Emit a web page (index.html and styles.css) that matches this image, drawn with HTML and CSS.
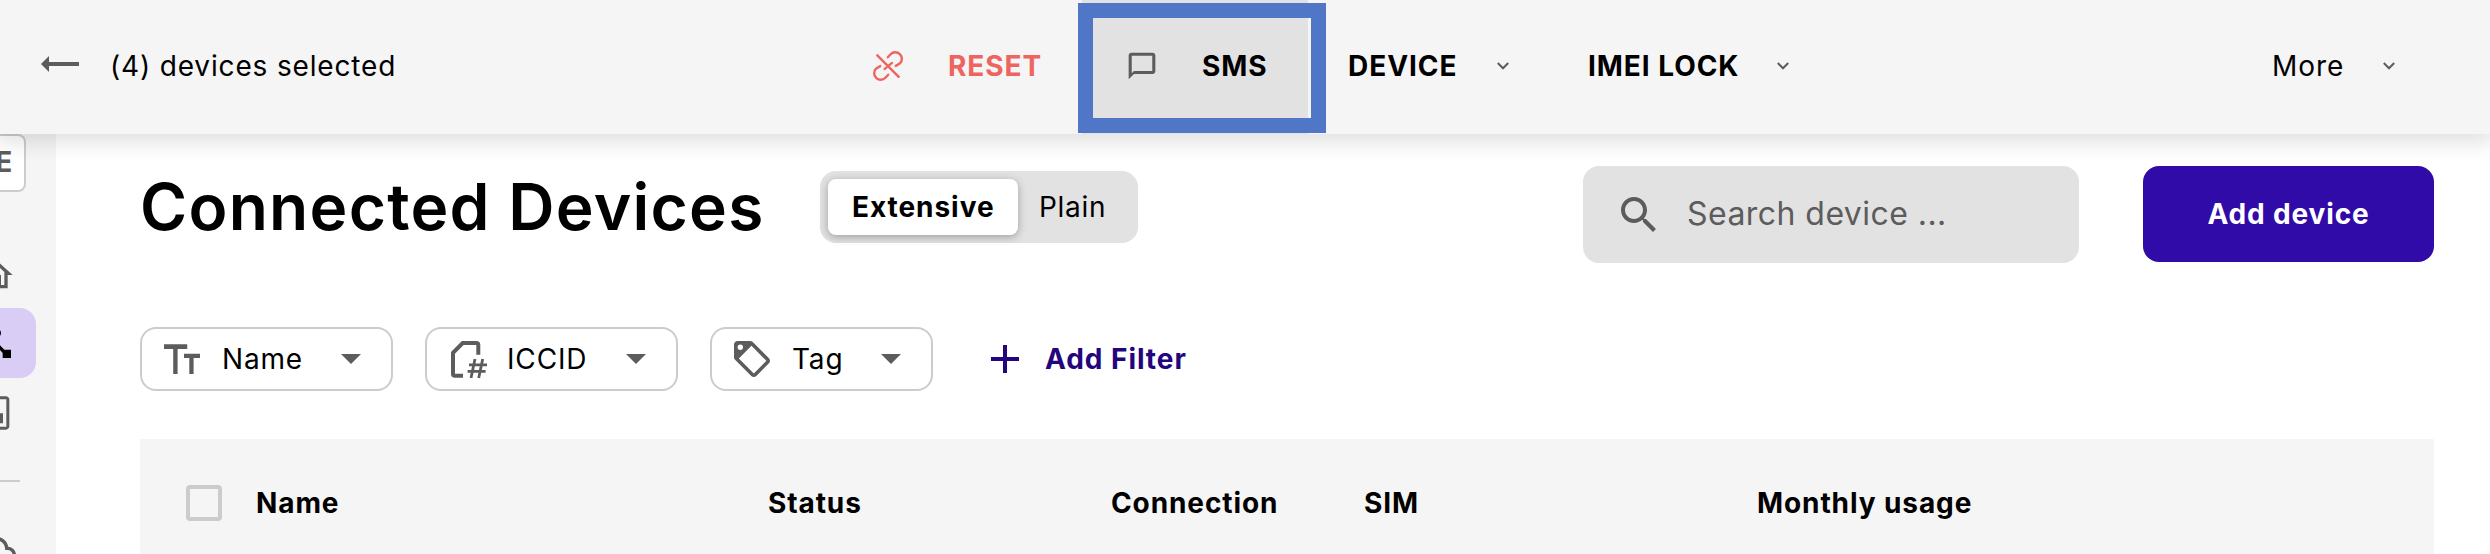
FILE: index.html
```html
<!DOCTYPE html>
<html lang="en">
<head>
<meta charset="utf-8">
<title>Connected Devices</title>
<link rel="stylesheet" href="styles.css">
</head>
<body>
<header class="selection-bar">
  <div class="selection-info">
    <svg class="back-icon" width="38" height="16" viewBox="0 0 38 16"><path d="M0 8L8 0V6H38V10H8V16Z"/></svg>
    <span class="selection-count">(4) devices selected</span>
  </div>
  <button class="action action-reset">
    <svg class="unlink-icon" width="30" height="30" viewBox="0 0 30 30"><path d="M4.3 4.3L25.7 25.8M11.7 17.9L19 11.9M14.8 6.3L17.6 3.3A6.5 6.5 0 0 1 27 12.4L22.8 14.9M15.2 23.7L12.4 26.7A6.5 6.5 0 0 1 3 17.6L7.2 15.1"/></svg>
    <span>RESET</span>
  </button>
  <button class="action action-sms">
    <svg class="icon sms-icon" width="32" height="32" viewBox="0 0 24 24"><path d="M20 2H4c-1.1 0-2 .9-2 2v18l4-4h14c1.1 0 2-.9 2-2V4c0-1.1-.9-2-2-2zm-.3 13.7H6l-1.7 1.7V4.3h15.4v11.4z"/></svg>
    <span>SMS</span>
    <span class="focus-frame"></span>
  </button>
  <button class="action action-device">
    <span class="label-device">DEVICE</span>
    <svg class="chevron" width="12" height="8" viewBox="0 0 12 8"><path d="M.8 1L6 6.3L11.2 1"/></svg>
  </button>
  <button class="action action-imei">
    <span class="label-imei">IMEI LOCK</span>
    <svg class="chevron" width="12" height="8" viewBox="0 0 12 8"><path d="M.8 1L6 6.3L11.2 1"/></svg>
  </button>
  <button class="action action-more">
    <span class="label-more">More</span>
    <svg class="chevron" width="12" height="8" viewBox="0 0 12 8"><path d="M.8 1L6 6.3L11.2 1"/></svg>
  </button>
</header>
<div class="shell">
  <nav class="sidebar">
    <div class="org-badge"><span>E</span></div>
    <a class="nav-item nav-home"><svg class="icon" width="40" height="40" viewBox="0 0 24 24"><path d="M12 5.69l5 4.5V18h-2v-6H9v6H7v-7.81l5-4.5M12 3L2 12h3v8h6v-6h2v6h6v-8h3L12 3z"/></svg></a>
    <a class="nav-item nav-active"><svg width="40" height="40" viewBox="0 0 24 24"><path d="M17 16l-4-4V8.82C14.16 8.4 15 7.3 15 6c0-1.66-1.34-3-3-3S9 4.34 9 6c0 1.3.84 2.4 2 2.82V12l-4 4H3v5h5v-3.05l4-4.2 4 4.2V21h5v-5h-4z"/></svg></a>
    <a class="nav-item"><svg class="icon" width="40" height="40" viewBox="0 0 24 24"><path d="M18 2h-8L4 8v12c0 1.1.9 2 2 2h12c1.1 0 2-.9 2-2V4c0-1.1-.9-2-2-2zm.2 18.2H6V8.83L10.83 3.8H18.2zM14 12.2h2.2v6H14z"/></svg></a>
    <hr class="nav-divider">
    <a class="nav-item nav-cloud"><svg class="icon" width="40" height="40" viewBox="0 0 24 24"><path d="M19.35 10.04C18.67 6.59 15.64 4 12 4 9.11 4 6.61 5.64 5.36 8.04 2.35 8.36 0 10.9 0 14c0 3.31 2.69 6 6 6h13c2.76 0 5-2.24 5-5 0-2.64-2.05-4.78-4.65-4.96zM19 18H6c-2.21 0-4-1.79-4-4s1.79-4 4-4h.71C7.37 7.69 9.48 6 12 6c3.04 0 5.5 2.46 5.5 5.5v.5H19c1.66 0 3 1.34 3 3s-1.34 3-3 3z"/></svg></a>
  </nav>
  <main class="content">
    <div class="title-row">
      <h1>Connected Devices</h1>
      <div class="view-toggle">
        <span class="toggle-option toggle-on">Extensive</span>
        <span class="toggle-option">Plain</span>
      </div>
      <div class="search">
        <svg class="icon" width="48" height="48" viewBox="0 0 24 24"><path d="M15.5 14h-.79l-.28-.27C15.41 12.59 16 11.11 16 9.5 16 5.91 13.09 3 9.5 3S3 5.91 3 9.5 5.91 16 9.5 16c1.61 0 3.09-.59 4.23-1.57l.27.28v.79l5 4.99L20.49 19l-4.99-5zm-6 0C7.01 14 5 11.99 5 9.5S7.01 5 9.5 5 14 7.01 14 9.5 11.99 14 9.5 14z"/></svg>
        <span class="search-text">Search device ...</span>
      </div>
      <button class="add-device">Add device</button>
    </div>
    <div class="filters">
      <div class="chip">
        <svg class="icon" width="36" height="36" viewBox="0 0 36 36"><path d="M0 3.3H23.2V8H13.6V33H9.2V8H0ZM20 12.7H36V17H29.6V33H25.3V17H20Z"/></svg>
        <span>Name</span>
        <svg class="caret" width="20" height="10" viewBox="0 0 20 10"><path d="M0 0H20L10 10Z"/></svg>
      </div>
      <div class="chip">
        <svg class="sim-icon" width="37" height="38" viewBox="0 0 37 38"><path class="sim-outline" d="M27.3 14.8V5Q27.3 3 25.3 3H11.7L2 12.8V34Q2 35.8 4 35.8H12"/><path class="sim-hash" d="M24 19L20 38M31.7 19L27.7 38M18 24.8H36M16.6 31.4H34.6"/></svg>
        <span>ICCID</span>
        <svg class="caret" width="20" height="10" viewBox="0 0 20 10"><path d="M0 0H20L10 10Z"/></svg>
      </div>
      <div class="chip chip-tag">
        <svg class="icon" width="36" height="36" viewBox="2 2 20 20"><path fill-rule="evenodd" d="M21.41 11.58l-9-9C12.05 2.22 11.55 2 11 2H4c-1.1 0-2 .9-2 2v7c0 .55.22 1.05.59 1.42l9 9c.36.36.86.58 1.41.58s1.05-.22 1.41-.59l7-7c.37-.36.59-.86.59-1.41s-.23-1.06-.59-1.42zM11.7 4.7L4.7 11.7L13 20L20 13ZM5.5 4A1.5 1.5 0 1 0 5.5 7A1.5 1.5 0 1 0 5.5 4Z"/></svg>
        <span>Tag</span>
        <svg class="caret" width="20" height="10" viewBox="0 0 20 10"><path d="M0 0H20L10 10Z"/></svg>
      </div>
      <button class="add-filter">
        <svg width="28" height="28" viewBox="0 0 28 28"><path d="M12 0H16V12H28V16H16V28H12V16H0V12H12Z"/></svg>
        <span>Add Filter</span>
      </button>
    </div>
    <div class="table-head">
      <span class="checkbox"></span>
      <span>Name</span>
      <span>Status</span>
      <span>Connection</span>
      <span>SIM</span>
      <span>Monthly usage</span>
    </div>
  </main>
</div>
</body>
</html>
```
FILE: styles.css
```css
* { box-sizing: border-box; }

body {
  margin: 0;
  height: 554px;
  overflow: hidden;
  background: #fff;
  color: #000;
  font: 400 28px/34px Inter, sans-serif;
  letter-spacing: 0.84px;
}
svg { display: block; flex: none; overflow: visible; }
span { white-space: nowrap; }
button {
  margin: 0;
  padding: 0;
  border: 0;
  background: none;
  color: inherit;
  font: inherit;
  letter-spacing: inherit;
}
.icon, .caret, .back-icon { fill: #5c5c5c; }

/* Selection bar */
.selection-bar {
  position: relative;
  z-index: 1;
  display: grid;
  grid-template-columns: 840px 242px 226px 240px 280px 1fr;
  height: 134px;
  background: #f5f5f5;
  box-shadow: 0 4px 20px 4px rgba(0, 0, 0, .125);
}
.selection-info, .action {
  display: flex;
  align-items: center;
  padding-bottom: 2px;
}
.selection-info { padding-left: 41px; }
.back-icon { margin: 0 31px 4px 0; }
.action { font-weight: 700; letter-spacing: 0.95px; }
.action-reset { padding-left: 33px; color: #ee6560; }
.unlink-icon {
  margin-right: 45px;
  fill: none;
  stroke: #ee6560;
  stroke-width: 2.4;
  stroke-linecap: round;
}
.action-sms {
  position: relative;
  padding-left: 44px;
  background: #e2e2e2;
}
.sms-icon { margin-right: 44px; }
.focus-frame {
  position: absolute;
  left: -4.5px;
  top: 3px;
  width: 248px;
  height: 130px;
  border: 15px solid #5077c7;
}
.action-device, .action-imei { padding-left: 40px; }
.label-device { width: 149px; text-align: left; }
.label-imei { width: 189px; text-align: left; }
.action-more { justify-content: flex-end; padding-right: 95px; font-weight: 400; }
.label-more { width: 111px; text-align: left; }
.chevron { fill: none; stroke: #5c5c5c; stroke-width: 2; }

/* Sidebar */
.shell { display: flex; height: 420px; overflow: hidden; }
.sidebar { flex: none; width: 56px; background: #f5f5f5; }
.org-badge {
  display: flex;
  justify-content: flex-end;
  width: 26px;
  height: 58px;
  padding: 9px 11px 0 0;
  border: 2px solid #ccc;
  border-width: 2px 2px 2px 0;
  border-radius: 0 8px 8px 0;
  background: #fff;
  color: #5c5c5c;
  font-weight: 700;
}
.nav-item {
  display: flex;
  align-items: center;
  width: 36px;
  height: 70px;
}
.nav-item svg { margin-left: -24px; }
.nav-home { margin-top: 46px; padding-top: 3px; }
.nav-active { border-radius: 0 16px 16px 0; background: #d9cdf6; }
.nav-divider { width: 20px; height: 2px; margin: 32px 0 33px; border: 0; background: #ccc; }

/* Content */
.content { width: 2294px; margin-left: 84px; }
.title-row { display: flex; align-items: flex-start; padding-top: 32px; height: 193px; }
h1 {
  width: 680px;
  margin: 2px 0 0;
  font-size: 64px;
  line-height: 78px;
  font-weight: 600;
  letter-spacing: 1.28px;
  white-space: nowrap;
}
.view-toggle {
  display: flex;
  width: 318px;
  height: 72px;
  margin-top: 5px;
  padding: 8px;
  border-radius: 16px;
  background: #e2e2e2;
}
.toggle-option { padding: 11px 0 0 21px; letter-spacing: 0.7px; }
.toggle-on {
  width: 190px;
  padding-left: 24px;
  border-radius: 8px;
  background: #fff;
  box-shadow: 0 2px 8px rgba(0, 0, 0, .3);
  font-weight: 700;
  letter-spacing: 0.95px;
}
.search {
  display: flex;
  align-items: center;
  width: 496px;
  height: 97px;
  margin-left: 445px;
  padding-left: 32px;
  border-radius: 16px;
  background: #e2e2e2;
  color: #5c5c5c;
  font-size: 32px;
  line-height: 40px;
  letter-spacing: 0.45px;
}
.search .icon { margin-right: 24px; }
.search-text { padding-bottom: 2px; }
.add-device {
  width: 291px;
  height: 96px;
  margin-left: 64px;
  border-radius: 16px;
  background: #300ba8;
  color: #fff;
  font-weight: 700;
}

/* Filters */
.filters { display: flex; gap: 32px; height: 112px; }
.chip {
  display: flex;
  align-items: center;
  width: 253px;
  height: 64px;
  padding: 0 30px 0 22px;
  border: 2px solid #ccc;
  border-radius: 16px;
}
.chip-tag { width: 223px; }
.chip .icon { margin-right: 22px; }
.sim-icon { margin: 0 19px 0 2px; fill: none; stroke: #5c5c5c; }
.chip span { flex: 1; }
.sim-outline { stroke-width: 4; }
.sim-hash { stroke-width: 2.8; }
.add-filter {
  display: flex;
  align-items: center;
  gap: 26px;
  height: 64px;
  margin-left: 26px;
  color: #23057d;
  fill: #23057d;
  font-weight: 700;
  letter-spacing: 0.95px;
}

/* Table */
.table-head {
  display: grid;
  grid-template-columns: 70px 512px 343px 253px 393px 1fr;
  align-items: center;
  height: 115px;
  padding: 13px 0 0 46px;
  background: #f5f5f5;
  font-weight: 700;
  letter-spacing: 0.9px;
}
.checkbox { width: 36px; height: 36px; border: 4px solid #ccc; border-radius: 4px; }
```
